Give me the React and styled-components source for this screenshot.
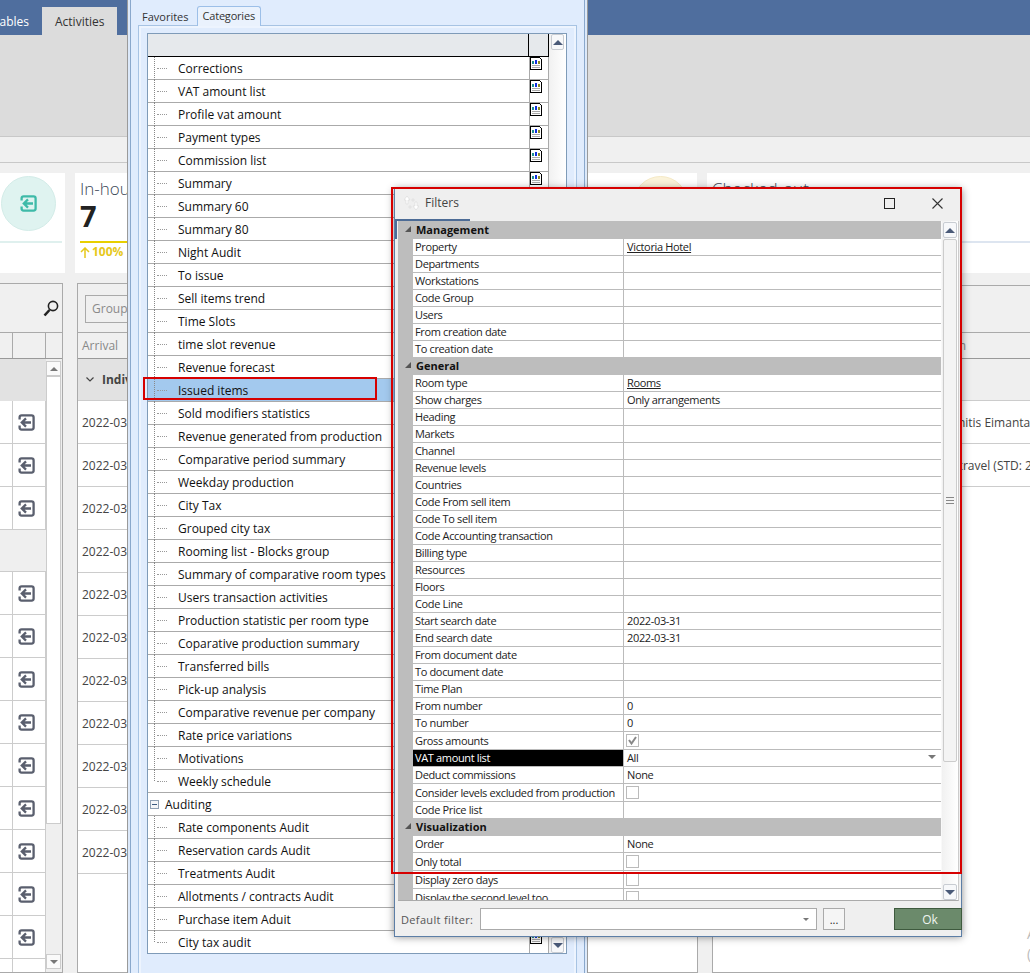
import React from "react";
import styled, { createGlobalStyle } from "styled-components";

const Global = createGlobalStyle`
  html, body { margin: 0; padding: 0; background: #f0f0f0; }
  body { font-family: "Open Sans", "Noto Sans", sans-serif; color: #222; }
  * { box-sizing: border-box; }
  svg { display: block; }
`;

const Page = styled.div`
  position: relative; width: 1030px; height: 973px; overflow: hidden;
  display: flex; flex-direction: column; background: #f0f0f0;
`;
const TopBar = styled.div`
  height: 35px; background: #4f6e9e; display: flex; align-items: flex-end; flex: none;
`;
const ClippedTab = styled.div`
  width: 42px; display: flex; justify-content: flex-end; overflow: hidden;
`;
const Tab = styled.div`
  height: 28px; flex: none; padding: 0 13px; display: flex; align-items: center; font-size: 12px;
  color: ${p => (p.$active ? "#333" : "#fff")}; background: ${p => (p.$active ? "#dcdcdc" : "transparent")};
`;
const Ribbon = styled.div`height: 102px; flex: none; background: #dcdcdc; border-bottom: 1px solid #c8c8c8;`;
const Strip = styled.div`height: 26px; flex: none; background: #f0f0f0; border-bottom: 1px solid #c8c8c8;`;
const Cards = styled.div`
  flex: none; display: flex; gap: 10px; padding-top: 10px; margin-left: -241px; margin-right: -20px;
`;
const Card = styled.div`
  width: ${p => (p.$wide ? "auto" : "306px")}; flex: ${p => (p.$wide ? "1" : "none")}; height: 100px; background: #fff;
  padding: 3px 3px 0 5px; display: flex; flex-direction: column;
`;
const CardTop = styled.div`display: flex; justify-content: space-between; height: 65px; flex: none;`;
const CardTitle = styled.div`font-size: 17px; line-height: 22px; font-weight: 300; color: #3a4656; margin-top: 2px;`;
const CardCount = styled.div`font-size: 29px; line-height: 32px; font-weight: 700; color: #222; margin-top: 0;`;
const Circle = styled.div`
  width: 55px; height: 55px; border-radius: 50%; background: ${p => p.$bg}; border: 1px solid ${p => p.$edge};
  color: #3ebaa8; display: flex; align-items: center; justify-content: center; margin-right: 6px; flex: none;
`;
const CardRule = styled.div`height: 2px; flex: none; background: ${p => p.$color};`;
const Trend = styled.div`
  font-size: 12px; line-height: 16px; margin-top: 1px; color: #e6c81a; font-weight: 700; white-space: nowrap;
  display: flex; align-items: center; gap: 2px;
`;
const TrendNote = styled.span`color: #8fa8c8; font-weight: 400; margin-left: 4px;`;

const Panels = styled.div`flex: 1; display: flex; gap: 14px; margin-top: 10px; margin-right: -2px; min-height: 0;`;
const PanelLeft = styled.div`
  width: 63px; flex: none; border: 1px solid #aaa; border-left: none; display: flex; flex-direction: column; background: #f0f0f0; overflow: hidden;
`;
const PanelMid = styled.div`
  width: 621px; flex: none; border: 1px solid #aaa; display: flex; flex-direction: column; background: #fff; overflow: hidden;
`;
const PanelRight = styled.div`
  flex: 1; margin-top: 2px; border: 1px solid #aaa; display: flex; flex-direction: column; background: #fff; overflow: hidden;
`;
const Toolbar = styled.div`
  height: ${p => p.$h || 49}px; flex: none; background: #f0f0f0; border-bottom: 1px solid #aaa;
  display: flex; align-items: center; justify-content: ${p => (p.$end ? "flex-end" : "flex-start")};
  padding: ${p => (p.$end ? "0 3px 0 0" : "0 0 0 7px")};
`;
const GroupInput = styled.div`
  width: 200px; height: 28px; border: 1px solid #aaa; font-size: 12px; color: #8a8a8a; padding-left: 6px;
  display: flex; align-items: center; margin-top: 1px;
`;
const ColHead = styled.div`
  height: 26px; flex: none; background: #f0f0f0; border-bottom: 1px solid #999; font-size: 12px; color: #888;
  display: flex; align-items: center; padding-left: ${p => p.$pad || 4}px; white-space: nowrap;
`;
const GroupRow = styled.div`
  height: ${p => p.$h || 42}px; flex: none; background: ${p => p.$bg || "#e2e2e2"}; border-bottom: 1px solid #ccc;
  display: flex; align-items: center; gap: 8px; padding-left: 8px; font-size: 12px; font-weight: 700; color: #444;
`;
const DateRow = styled.div`
  height: 43px; flex: none; background: #fff; border-bottom: 1px solid #ccc; display: flex; align-items: center;
  font-size: 12px; color: #444; padding-left: ${p => p.$pad || 4}px; white-space: nowrap;
`;
const LeftHeadCells = styled.div`display: flex; height: 26px; flex: none; border-bottom: 1px solid #999;`;
const LeftHeadCell = styled.div`width: ${p => p.$w}px; flex: none; border-right: 1px solid #aaa;`;
const LeftBody = styled.div`display: flex; flex: 1; min-height: 0;`;
const LeftTable = styled.div`width: 46px; flex: none; display: flex; flex-direction: column; overflow: hidden;`;
const LeftRow = styled.div`
  height: 43px; flex: none; background: #fff; border-bottom: 1px solid #ccc; display: flex;
`;
const LeftCellA = styled.div`width: 13px; flex: none; border-right: 1px solid #ccc;`;
const LeftCellB = styled.div`
  width: 33px; flex: none; border-right: 1px solid #ccc; display: flex; align-items: center; justify-content: center; color: #5a5f6e; padding-right: 5px;
`;
const LeftBlank = styled.div`height: 42px; flex: none; background: #efefef; border-bottom: 1px solid #ccc;`;
const LeftGroup = styled.div`height: 42px; flex: none; background: #e2e2e2;`;
const LeftScroll = styled.div`
  flex: none; width: 16px; display: flex; flex-direction: column; background: #efefef; padding-top: 2px;
`;
const MiniBtn = styled.div`
  height: 15px; flex: none; background: #fafafa; border: 1px solid #ccc; display: flex; align-items: center; justify-content: center; margin-right: 1px;
`;
const MiniThumb = styled.div`height: 448px; flex: none; background: #fff; border: 1px solid #ccc; margin-right: 1px;`;
const Spacer = styled.div`flex: 1;`;
const MiniGap = styled.div`height: 130px; flex: none;`;
const UpTri = styled.span`
  width: 0; height: 0; border-left: ${p => p.$s || 4}px solid transparent; border-right: ${p => p.$s || 4}px solid transparent;
  border-bottom: ${p => p.$s || 4}px solid ${p => p.$c || "#4a5a78"};
`;
const DownTri = styled.span`
  width: 0; height: 0; border-left: ${p => p.$s || 4}px solid transparent; border-right: ${p => p.$s || 4}px solid transparent;
  border-top: ${p => p.$s || 4}px solid ${p => p.$c || "#4a5a78"};
`;
const NoteBlock = styled.div`
  margin-top: auto; padding: 0 0 8px 314px; font-size: 14px; line-height: 20px; color: #bbb; white-space: nowrap;
`;

/* report window */
const ReportWindow = styled.div`
  position: absolute; left: 127px; top: 0; width: 461px; height: 973px; overflow: hidden;
  border-left: 1px solid #9a9a9a; border-right: 1px solid #9a9a9a; background: #dce9fa; padding: 0 2px;
`;
const ReportInner = styled.div`
  height: 100%; background: #e0ecfd; border-left: 1px solid #8aa8cc; border-right: 1px solid #8aa8cc; padding: 0 7px;
`;
const TabRow = styled.div`height: 25px; display: flex; align-items: flex-end; padding-left: 3px; gap: 7px;`;
const WinTab = styled.div`
  font-size: 11px; letter-spacing: ${p => (p.$active ? "-.2px" : "0")}; color: #333; height: ${p => (p.$active ? "20px" : "17px")}; padding: ${p => (p.$active ? "0 5px 2px" : "0 1px")};
  display: flex; align-items: center; white-space: nowrap; margin-bottom: ${p => (p.$active ? "-1px" : "0")};
  ${p => p.$active && "border: 1px solid #9cbfe8; border-bottom: none; border-radius: 3px 3px 0 0; background: #eaf2fd; position: relative; z-index: 1;"}
`;
const TabPanel = styled.div`
  height: 960px; border: 1px solid #a7c3e3; box-shadow: inset 0 0 0 2px #edf4fe; padding: 7px 8px;
`;
const TreeList = styled.div`
  width: 420px; height: 921px; border: 1px solid #7f9bb8; background: #fff; display: flex; overflow: hidden;
`;
const TreeMain = styled.div`width: 401px; flex: none; display: flex; flex-direction: column;`;
const TreeHead = styled.div`
  height: 23px; flex: none; background: #e6e9ec; border-bottom: 1px solid #000; border-right: 1px solid #000; display: flex;
`;
const TreeHeadName = styled.div`flex: 1; border-right: 1px solid #000;`;
const TreeHeadIcon = styled.div`width: 19px; flex: none;`;
const TreeRow = styled.div`
  height: ${p => (p.$last ? 22 : 23)}px; flex: none; display: flex; border-right: 1px solid #aaa;
  border-bottom: ${p => (p.$last ? "none" : "1px solid #aaa")}; background: #fff;
`;
const TreeName = styled.div`
  flex: 1; min-width: 0; display: flex; align-items: center; font-size: 12px; color: #111; white-space: nowrap;
  background: ${p => (p.$selected ? "#a3c9ee" : "transparent")};
`;
const TreeIconCell = styled.div`width: 19px; flex: none; border-left: 1px solid #aaa;`;
const Branch = styled.div`
  flex: none; width: 24px; margin-left: 6px; align-self: stretch; display: flex; align-items: center;
  border-left: 1px dotted #888; margin-bottom: ${p => (p.$end ? "11px" : "-1px")};
  &::after { content: ""; width: 10px; margin-left: 2px; border-top: 1px dotted #999; margin-top: ${p => (p.$end ? "11px" : "0")}; }
`;
const Expander = styled.div`
  width: 9px; height: 9px; flex: none; margin-left: 2px; margin-right: 6px; border: 1px solid #8fa0b4; background: #f4f6f9;
  display: flex; align-items: center; justify-content: center;
  &::after { content: ""; width: 5px; height: 1px; background: #3b5a80; }
`;
const TreeScroll = styled.div`
  flex: 1; display: flex; flex-direction: column; justify-content: space-between; padding: 0 2px 0 2px;
  background: linear-gradient(90deg, #f1f1f1, #fff);
`;
const SBtn = styled.div`
  height: 16px; flex: none; border: 1px solid #c8ccd2; border-radius: 2px; background: #f7f8fa;
  display: flex; align-items: center; justify-content: center;
`;

/* filters dialog */
const Dialog = styled.div`
  position: absolute; left: 394px; top: 189px; width: 568px; height: 748px; background: #efefef;
  border: 1px solid #5c7ea6; border-top: none; box-shadow: 0 0 8px rgba(0,0,0,.45);
  display: flex; flex-direction: column;
`;
const FocusEdge = styled.div`
  position: absolute; left: 0; top: 30px; width: 75px; height: 20px; border: 2px solid #4d6c96; border-bottom: none; border-right-width: 1px;
`;
const TitleBar = styled.div`height: 32px; flex: none; display: flex; align-items: center; padding: 0 18px 4px 9px;`;
const TitleText = styled.div`font-size: 12px; color: #444; margin-left: 6px; padding-bottom: 1px;`;
const TitleGap = styled.div`flex: 1;`;
const MaxBtn = styled.div`width: 11px; height: 11px; border: 1px solid #222; margin-right: 37px;`;
const DialogBody = styled.div`
  height: 680px; flex: none; margin: 0 2px 0 3px; display: flex; position: relative; border-bottom: 1px solid #aaa; border-right: 1px solid #ccc; background: #f9f9f9;
`;
const PropGrid = styled.div`width: 543px; flex: none; display: flex; flex-direction: column; overflow: hidden;`;
const CatRow = styled.div`
  height: 18px; flex: none; background: #bdbdbd; display: flex; align-items: center; font-size: 11px; font-weight: 700; color: #111; padding-bottom: 2px;
`;
const CatArrow = styled.div`width: 18px; flex: none; padding-left: 6px; display: flex; align-items: center;`;
const PropRow = styled.div`height: ${p => p.$h}px; flex: none; display: flex;`;
const Gutter = styled.div`width: 15px; flex: none; background: #bdbdbd;`;
const PropCells = styled.div`
  flex: 1; display: flex; background: #fff; border-bottom: ${p => (p.$last ? "none" : "1px solid #bbb")}; min-width: 0;
`;
const PropLabel = styled.div`
  width: 211px; flex: none; padding: 0 0 ${p => (p.$tall ? 0 : 2)}px 2px; font-size: 11px; letter-spacing: -.35px; display: flex; align-items: center; white-space: nowrap;
  border-right: 1px solid #bbb; background: ${p => (p.$on ? "#000" : "transparent")}; color: ${p => (p.$on ? "#fff" : "#222")};
`;
const PropValue = styled.div`
  flex: 1; padding: 0 5px 2px 3px; font-size: 11px; letter-spacing: -.35px; display: flex; align-items: center; justify-content: space-between; white-space: nowrap; color: #222;
  text-decoration: ${p => (p.$link ? "underline" : "none")};
`;
const Check = styled.div`
  width: 13px; height: 13px; flex: none; margin: 2px 0 0 -1px; border: 1px solid #bbb; background: #fff; display: flex; align-items: center; justify-content: center;
`;
const ScrollCol = styled.div`width: 16px; flex: none; margin-left: 1px; padding: 1px 1px 0 1px; display: flex; flex-direction: column; background: linear-gradient(90deg,#f1f1f1,#fff);`;
const FThumb = styled.div`
  height: 523px; flex: none; background: #f4f4f4; border: 1px solid #ccc; border-radius: 2px; margin-top: 1px; display: flex; align-items: center; justify-content: center;
`;
const Grip = styled.div`width: 8px; height: 7px; border-top: 1px solid #888; border-bottom: 1px solid #888; position: relative;
  &::after { content: ""; position: absolute; left: 0; right: 0; top: 2px; height: 1px; background: #888; }`;
const DialogFooter = styled.div`flex: 1; display: flex; align-items: center; padding-left: 6px; padding-top: 1px;`;
const FooterLabel = styled.div`width: 79px; flex: none; font-size: 11px; color: #555; letter-spacing: .35px;`;
const ComboBox = styled.div`
  width: 337px; height: 22px; flex: none; background: #fff; border: 1px solid #aaa; display: flex; align-items: center; justify-content: flex-end; padding-right: 7px;
`;
const DotsBtn = styled.div`
  width: 22px; height: 22px; flex: none; margin-left: 6px; border: 1px solid #aaa; background: #f5f5f5; font-size: 11px; display: flex; align-items: center; justify-content: center; color: #222;
`;
const OkBtn = styled.div`
  width: 68px; height: 22px; flex: none; margin-left: auto; background: #6b8a6b; border: 1px solid #3e5a3e; color: #eef4ee; font-size: 12px; padding-left: 4px;
  display: flex; align-items: center; justify-content: center; margin-right: -1px;
`;
const IssuedMark = styled.div`
  position: absolute; left: 143px; top: 377px; width: 234px; height: 23px; border: 2px solid #d60000;
`;
const FiltersMark = styled.div`
  position: absolute; left: 391px; top: 187px; width: 571px; height: 687px; border: 2px solid #d60000;
`;

const EnterIcon = ({ size = 17 }) => (
  <svg width={size} height={size} viewBox="0 0 17 17" fill="none" stroke="currentColor" strokeWidth="2.3">
    <path d="M1.6 5.5V3.4Q1.6 1.4 3.6 1.4H13.6Q15.6 1.4 15.6 3.4V13.6Q15.6 15.6 13.6 15.6H3.6Q1.6 15.6 1.6 13.6V11.5" />
    <path d="M13 8.5H4.2M8 4.4L3.8 8.5L8 12.6" />
  </svg>
);
const SearchIcon = () => (
  <svg width="16" height="17" viewBox="0 0 16 17" fill="none" stroke="#222">
    <circle cx="10" cy="6" r="4.6" strokeWidth="1.6" />
    <path d="M6.5 10L1.5 15.5" strokeWidth="2.6" />
  </svg>
);
const ChevronIcon = () => (
  <svg width="8" height="5" viewBox="0 0 8 5" fill="none" stroke="#444" strokeWidth="1.2"><path d="M.5.5L4 4L7.5.5" /></svg>
);
const TrendArrow = () => (
  <svg width="10" height="11" viewBox="0 0 10 11" fill="none" stroke="#e6c81a" strokeWidth="1.5"><path d="M5 11V1M1 5L5 1L9 5" /></svg>
);
const ReportIcon = () => (
  <svg width="12" height="13" viewBox="0 0 12 13" shapeRendering="crispEdges">
    <path d="M.5.5H9.5L11.5 2.5V12.5H.5Z" fill="#fff" stroke="#000" />
    <rect x="2" y="4" width="2" height="3" fill="#1f8f8f" />
    <rect x="5" y="3" width="2" height="4" fill="#1030e0" />
    <rect x="8" y="4" width="2" height="3" fill="#8a8a20" />
    <rect x="2" y="8" width="8" height="1" fill="#aaa" />
    <rect x="2" y="10" width="8" height="1" fill="#aaa" />
  </svg>
);
const DiaIcon = () => (
  <svg width="15" height="14" viewBox="0 0 15 14">
    <path d="M3 0L6 4H4V8H2V4H0Z" fill="#fff" stroke="#d8d8d8" strokeWidth=".6" />
    <path d="M12 14L15 10H13V6H11V10H9Z" fill="#fff" stroke="#d8d8d8" strokeWidth=".6" />
    <path d="M9 2L11 4L9 6L7 4Z" fill="#e4e4e4" />
    <path d="M6 9L8 11L6 13L4 11Z" fill="#e4e4e4" />
  </svg>
);
const CatTriangle = () => (
  <svg width="8" height="8" viewBox="0 0 8 8"><path d="M7 1V7H1Z" fill="#555" /></svg>
);
const CheckMark = () => (
  <svg width="11" height="11" viewBox="0 0 11 11" fill="none" stroke="#888" strokeWidth="2"><path d="M2 5L4.5 8.5L9 2" /></svg>
);

const treeItems = [
  "Corrections", "VAT amount list", "Profile vat amount", "Payment types", "Commission list", "Summary", "Summary 60",
  "Summary 80", "Night Audit", "To issue", "Sell items trend", "Time Slots", "time slot revenue", "Revenue forecast",
  "Issued items", "Sold modifiers statistics", "Revenue generated from production", "Comparative period summary",
  "Weekday production", "City Tax", "Grouped city tax", "Rooming list - Blocks group", "Summary of comparative room types",
  "Users transaction activities", "Production statistic per room type", "Coparative production summary", "Transferred bills",
  "Pick-up analysis", "Comparative revenue per company", "Rate price variations", "Motivations", "Weekly schedule",
];
const auditItems = ["Rate components Audit", "Reservation cards Audit", "Treatments Audit", "Allotments / contracts Audit", "Purchase item Aduit", "City tax audit"];

const filterGroups = [
  { name: "Management", rows: [
    ["Property", "Victoria Hotel", "link"], ["Departments"], ["Workstations"], ["Code Group"], ["Users"], ["From creation date"], ["To creation date"],
  ] },
  { name: "General", rows: [
    ["Room type", "Rooms", "link"], ["Show charges", "Only arrangements"], ["Heading"], ["Markets"], ["Channel"], ["Revenue levels"], ["Countries"],
    ["Code From sell item"], ["Code To sell item"], ["Code Accounting transaction"], ["Billing type"], ["Resources"], ["Floors"], ["Code Line"],
    ["Start search date", "2022-03-31"], ["End search date", "2022-03-31"], ["From document date"], ["To document date"], ["Time Plan"],
    ["From number", "0"], ["To number", "0"], ["Gross amounts", "", "checked"], ["VAT amount list", "All", "selected"], ["Deduct commissions", "None"],
    ["Consider levels excluded from production", "", "check"], ["Code Price list"],
  ] },
  { name: "Visualization", rows: [
    ["Order", "None"], ["Only total", "", "check"], ["Display zero days", "", "check"], ["Display the second level too", "", "check"],
  ] },
];

const dates = Array.from({ length: 11 });
const leftBefore = [0, 1, 2];
const leftAfter = Array.from({ length: 10 });

export default function App() {
  return (
    <Page>
      <Global />
      <TopBar>
        <ClippedTab><Tab>Variables</Tab></ClippedTab>
        <Tab $active>Activities</Tab>
      </TopBar>
      <Ribbon />
      <Strip />
      <Cards>
        <Card>
          <CardTop><div /><Circle $bg="#dff3f0" $edge="#d3ece8"><EnterIcon /></Circle></CardTop>
          <CardRule $color="#dff0ee" />
        </Card>
        <Card>
          <CardTop>
            <div><CardTitle>In-house</CardTitle><CardCount>7</CardCount></div>
          </CardTop>
          <CardRule $color="#e8cf00" />
          <Trend><TrendArrow />100%<TrendNote>of total</TrendNote></Trend>
        </Card>
        <Card>
          <CardTop><div /><Circle $bg="#fbf3da" $edge="#f5e9c6" /></CardTop>
          <CardRule $color="#f5e9c6" />
        </Card>
        <Card $wide>
          <CardTop><div><CardTitle>Checked-out</CardTitle></div></CardTop>
          <CardRule $color="#dde5f0" />
        </Card>
      </Cards>
      <Panels>
        <PanelLeft>
          <Toolbar $end><SearchIcon /></Toolbar>
          <LeftHeadCells><LeftHeadCell $w={13} /><LeftHeadCell $w={33} /></LeftHeadCells>
          <LeftBody>
            <LeftTable>
              <LeftGroup />
              {leftBefore.map(i => (
                <LeftRow key={i}><LeftCellA /><LeftCellB><EnterIcon /></LeftCellB></LeftRow>
              ))}
              <LeftBlank />
              {leftAfter.map((_, i) => (
                <LeftRow key={i}><LeftCellA /><LeftCellB><EnterIcon /></LeftCellB></LeftRow>
              ))}
            </LeftTable>
            <LeftScroll>
              <MiniBtn><UpTri $c="#777" /></MiniBtn>
              <MiniThumb />
              <MiniGap />
              <MiniBtn><DownTri $c="#777" /></MiniBtn>
            </LeftScroll>
          </LeftBody>
        </PanelLeft>
        <PanelMid>
          <Toolbar><GroupInput>Group</GroupInput></Toolbar>
          <ColHead>Arrival</ColHead>
          <GroupRow><ChevronIcon />Individual</GroupRow>
          {dates.map((_, i) => <DateRow key={i}>2022-03-31</DateRow>)}
        </PanelMid>
        <PanelRight>
          <Toolbar $h={47} />
          <ColHead $pad={187}>Reservation</ColHead>
          <GroupRow $bg="#efefef" />
          <DateRow $pad={219}>Antanitis Eimantas</DateRow>
          <DateRow $pad={212}>Baltic travel (STD: 2022-03-31)</DateRow>
          <NoteBlock><div>Amount</div><div>(EUR)</div></NoteBlock>
        </PanelRight>
      </Panels>

      <ReportWindow>
        <ReportInner>
          <TabRow>
            <WinTab>Favorites</WinTab>
            <WinTab $active>Categories</WinTab>
          </TabRow>
          <TabPanel>
            <TreeList>
              <TreeMain>
                <TreeHead><TreeHeadName /><TreeHeadIcon /></TreeHead>
                {treeItems.map((t, i) => (
                  <TreeRow key={t}>
                    <TreeName $selected={t === "Issued items"}>
                      <Branch $end={i === treeItems.length - 1} />{t}
                    </TreeName>
                    <TreeIconCell><ReportIcon /></TreeIconCell>
                  </TreeRow>
                ))}
                <TreeRow>
                  <TreeName><Expander />Auditing</TreeName>
                  <TreeIconCell />
                </TreeRow>
                {auditItems.map((t, i) => (
                  <TreeRow key={t} $last={i === auditItems.length - 1}>
                    <TreeName><Branch $end={i === auditItems.length - 1} />{t}</TreeName>
                    <TreeIconCell><ReportIcon /></TreeIconCell>
                  </TreeRow>
                ))}
              </TreeMain>
              <TreeScroll>
                <SBtn><UpTri $s={5} /></SBtn>
                <SBtn><DownTri $s={5} /></SBtn>
              </TreeScroll>
            </TreeList>
          </TabPanel>
        </ReportInner>
      </ReportWindow>

      <IssuedMark />

      <Dialog>
        <FocusEdge />
        <TitleBar>
          <DiaIcon />
          <TitleText>Filters</TitleText>
          <TitleGap />
          <MaxBtn />
          <svg width="11" height="11" viewBox="0 0 11 11" stroke="#333" strokeWidth="1.1"><path d="M.5.5L10.5 10.5M10.5.5L.5 10.5" /></svg>
        </TitleBar>
        <DialogBody>
          <PropGrid>
            {filterGroups.map(g => (
              <React.Fragment key={g.name}>
                <CatRow><CatArrow><CatTriangle /></CatArrow>{g.name}</CatRow>
                {g.rows.map(([label, value, kind], i) => {
                  const isCheck = kind === "check" || kind === "checked";
                  const last = i === g.rows.length - 1 && g.name !== "Visualization";
                  return (
                    <PropRow key={label} $h={last ? 16 : isCheck ? 18 : 17}>
                      <Gutter />
                      <PropCells $last={last}>
                        <PropLabel $on={kind === "selected"} $tall={isCheck}>{label}</PropLabel>
                        <PropValue $link={kind === "link"}>
                          {isCheck ? <Check>{kind === "checked" && <CheckMark />}</Check> : value}
                          {kind === "selected" && <DownTri $c="#777" />}
                        </PropValue>
                      </PropCells>
                    </PropRow>
                  );
                })}
              </React.Fragment>
            ))}
          </PropGrid>
          <ScrollCol>
            <SBtn><UpTri $s={5} /></SBtn>
            <FThumb><Grip /></FThumb>
            <Spacer />
            <SBtn><DownTri $s={5} /></SBtn>
          </ScrollCol>
        </DialogBody>
        <DialogFooter>
          <FooterLabel>Default filter:</FooterLabel>
          <ComboBox><DownTri $s={3} $c="#777" /></ComboBox>
          <DotsBtn>...</DotsBtn>
          <OkBtn>Ok</OkBtn>
        </DialogFooter>
      </Dialog>

      <FiltersMark />
    </Page>
  );
}
